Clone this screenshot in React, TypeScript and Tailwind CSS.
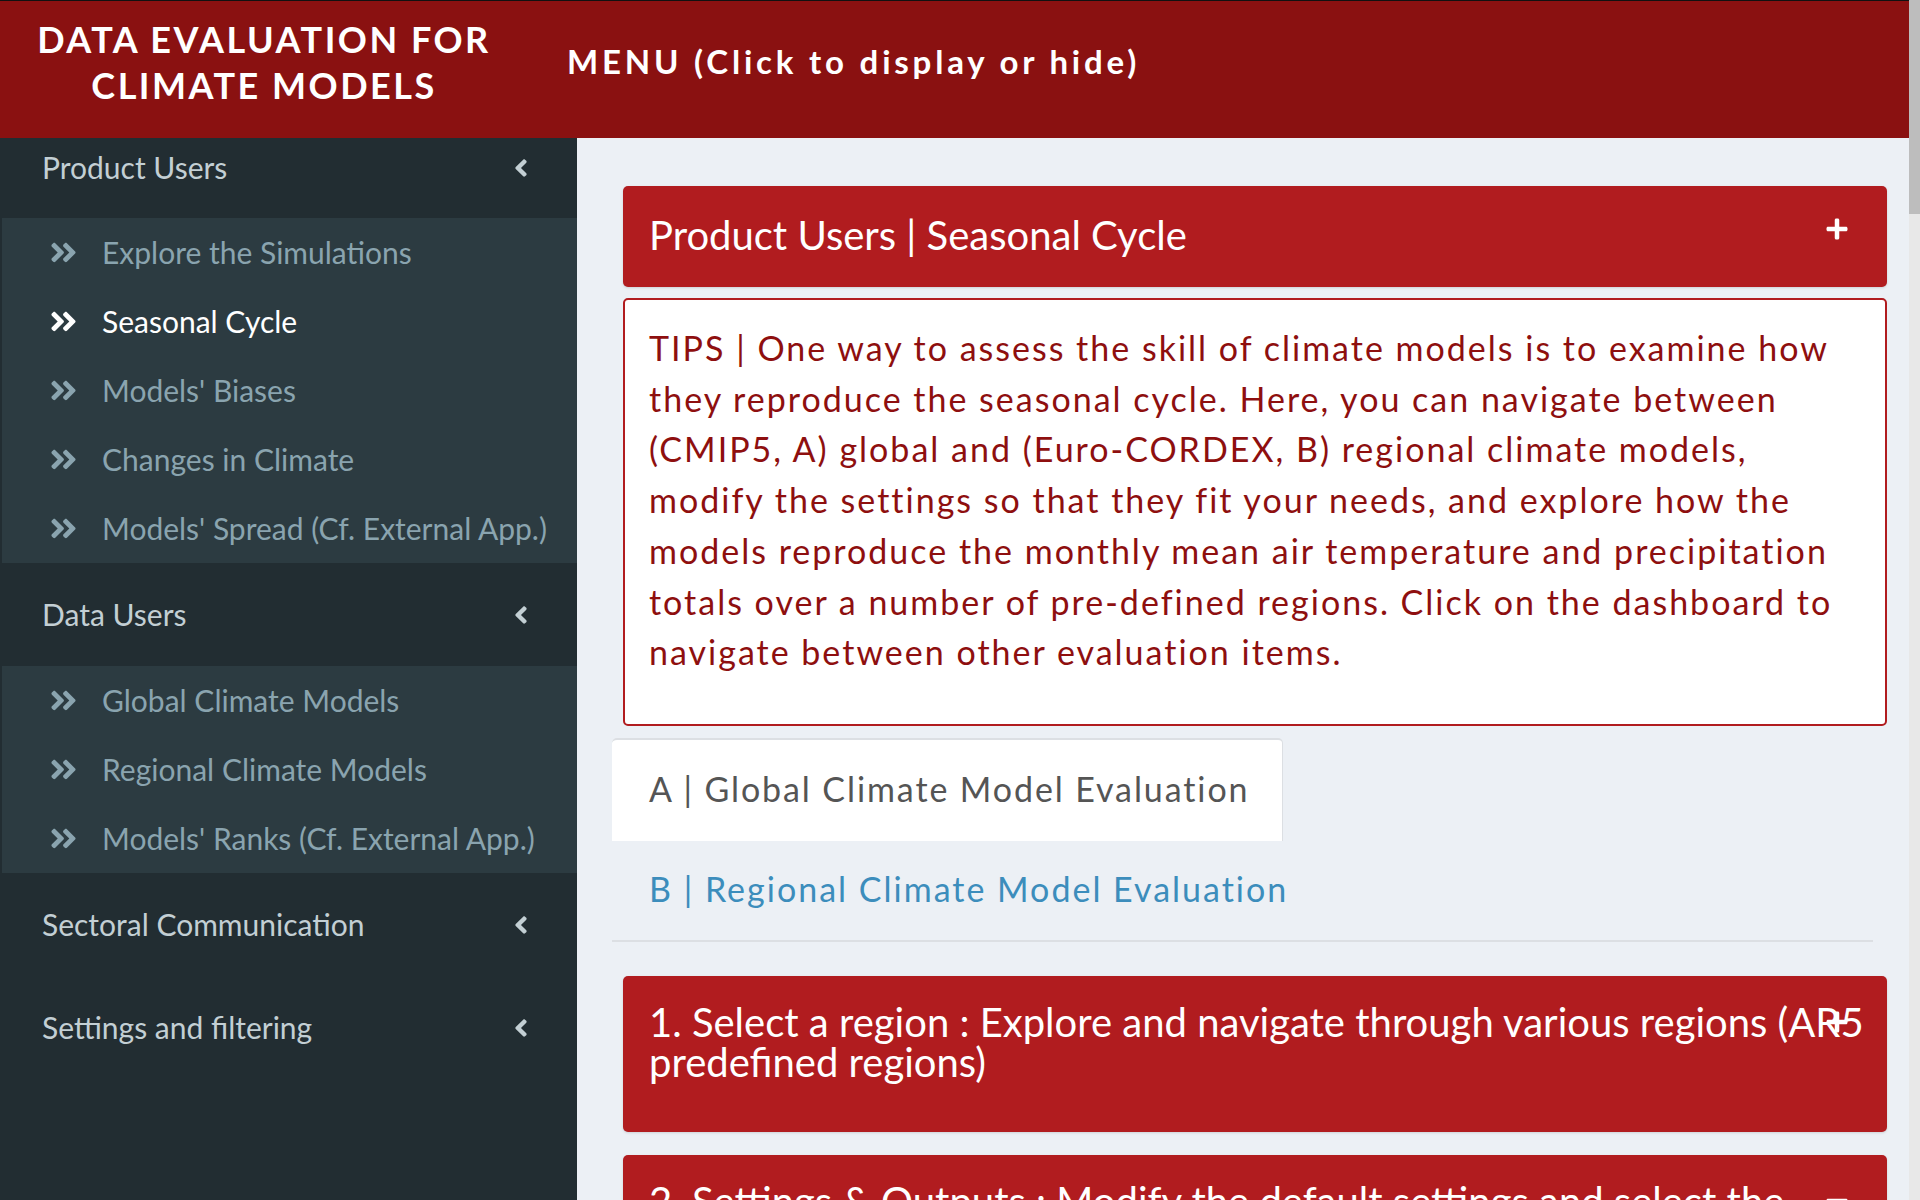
import { FaAngleDoubleRight, FaAngleLeft, FaPlus, FaMinus } from 'react-icons/fa';

const sections = [
  {
    title: 'Product Users',
    items: [
      { name: 'Explore the Simulations' },
      { name: 'Seasonal Cycle', active: true },
      { name: "Models' Biases" },
      { name: 'Changes in Climate' },
      { name: "Models' Spread (Cf. External App.)" },
    ],
  },
  {
    title: 'Data Users',
    items: [
      { name: 'Global Climate Models' },
      { name: 'Regional Climate Models' },
      { name: "Models' Ranks (Cf. External App.)" },
    ],
  },
  { title: 'Sectoral Communication', items: [] },
  { title: 'Settings and filtering', items: [] },
];

const tips = [
  'TIPS | One way to assess the skill of climate models is to examine how',
  'they reproduce the seasonal cycle. Here, you can navigate between',
  '(CMIP5, A) global and (Euro-CORDEX, B) regional climate models,',
  'modify the settings so that they fit your needs, and explore how the',
  'models reproduce the monthly mean air temperature and precipitation',
  'totals over a number of pre-defined regions. Click on the dashboard to',
  'navigate between other evaluation items.',
];

function SidebarHeader({ title, first }: { title: string; first?: boolean }) {
  return (
    <div
      className={
        first
          ? 'flex h-[80px] items-center pb-[21px] pl-[42px] pr-[42px] text-[30px] text-[#c3cfd4]'
          : 'flex h-[103px] items-center pl-[42px] pr-[42px] text-[30px] text-[#c3cfd4]'
      }
    >
      <span className="flex-1">{title}</span>
      <FaAngleLeft size={28} />
    </div>
  );
}

export default function App() {
  return (
    <div className="flex h-screen w-full overflow-hidden font-['Lato',sans-serif]">
      <div className="flex min-w-0 flex-1 flex-col">
        {/* Top bar */}
        <header className="flex h-[138px] shrink-0 border-t border-[#111] bg-[#8a1111] text-white">
          <div className="w-[528px] pt-[15px] text-center text-[36px] font-bold leading-[46px] tracking-[2.5px]">
            DATA EVALUATION FOR
            <br />
            CLIMATE MODELS
          </div>
          <div className="pl-[39px] pt-[40px] text-[33px] font-bold leading-[40px] tracking-[3.8px]">
            MENU (Click to display or hide)
          </div>
        </header>

        <div className="flex min-h-0 flex-1">
          {/* Sidebar */}
          <aside className="w-[577px] shrink-0 bg-[#222d32]">
            {sections.map((section, i) => (
              <div key={section.title}>
                <SidebarHeader title={section.title} first={i === 0} />
                {section.items.length > 0 && (
                  <div className="ml-[2px] bg-[#2c3b41]">
                    {section.items.map((item) => (
                      <div
                        key={item.name}
                        className={
                          item.active
                            ? 'flex h-[69px] items-center pl-[46px] text-[30px] text-white'
                            : 'flex h-[69px] items-center pl-[46px] text-[30px] text-[#8aa4af]'
                        }
                      >
                        <FaAngleDoubleRight size={31} />
                        <span className="ml-[23px]">{item.name}</span>
                      </div>
                    ))}
                  </div>
                )}
              </div>
            ))}
          </aside>

          {/* Main content */}
          <main className="min-w-0 flex-1 overflow-hidden bg-[#ecf0f5] pl-[46px] pr-[22px] pt-[48px]">
            <div className="relative flex h-[101px] items-center rounded-[5px] bg-[#b11c1f] pb-[4px] pl-[26px] text-[40px] text-white shadow-sm">
              <span>Product Users | Seasonal Cycle</span>
              <FaPlus size={24} className="absolute right-[38px] top-[31px]" />
            </div>

            <div className="mt-[11px] rounded-[5px] border-2 border-[#b11c1f] bg-white px-[24px] pb-[46px] pt-[23px] text-[34px] leading-[50.7px] tracking-[2px] text-[#8e0f0f]">
              {tips.map((line) => (
                <div key={line} className="whitespace-nowrap">
                  {line}
                </div>
              ))}
            </div>

            {/* Tabs */}
            <div className="-ml-[11px] mr-[14px] mt-[12px] border-b-2 border-[#dcdfe3]">
              <div className="flex h-[103px] w-[671px] items-center rounded-t-[5px] border-t-2 border-r border-[#dcdfe3] bg-white pb-[4px] pl-[37px] text-[34px] tracking-[1.9px] text-[#555]">
                A | Global Climate Model Evaluation
              </div>
              <div className="flex h-[99px] items-center pb-[4px] pl-[37px] text-[34px] tracking-[2px] text-[#3c8dbc]">
                B | Regional Climate Model Evaluation
              </div>
            </div>

            <div className="relative mt-[34px] h-[156px] rounded-[5px] bg-[#b11c1f] pl-[26px] pr-[14px] pt-[26px] text-[40px] leading-[40px] text-white shadow-sm">
              1. Select a region : Explore and navigate through various regions (AR5 predefined regions)
              <FaPlus size={24} className="absolute right-[38px] top-[34px]" />
            </div>

            <div className="relative mt-[23px] h-[156px] rounded-[5px] bg-[#b11c1f] pl-[26px] pr-[14px] pt-[26px] text-[40px] leading-[40px] text-white shadow-sm">
              2. Settings &amp; Outputs : Modify the default settings and select the outputs
              <FaMinus size={24} className="absolute right-[38px] top-[34px]" />
            </div>
          </main>
        </div>
      </div>

      {/* Scrollbar */}
      <div className="w-[11px] shrink-0 bg-[#e8e8e8]">
        <div className="h-[214px] bg-[#bdbdbd]" />
      </div>
    </div>
  );
}
